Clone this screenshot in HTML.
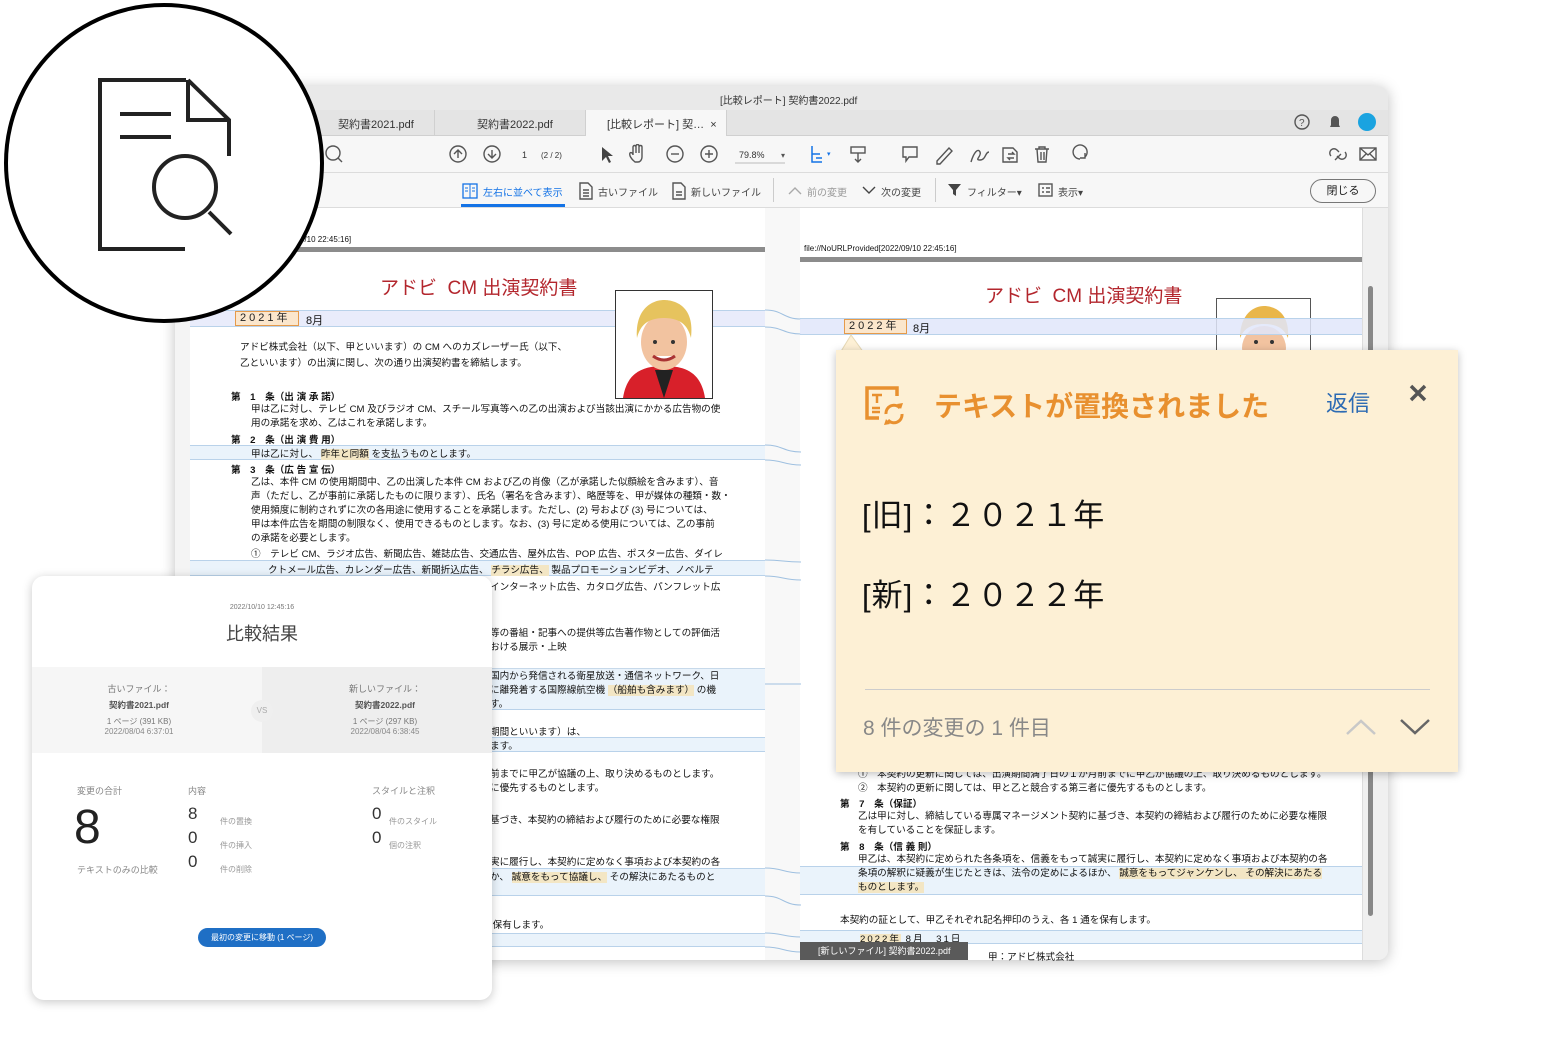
<!DOCTYPE html>
<html><head><meta charset="utf-8">
<style>
*{margin:0;padding:0;box-sizing:border-box}
body{width:1544px;height:1046px;background:#fff;position:relative;overflow:hidden;font-family:"Liberation Sans","Noto Sans CJK JP",sans-serif;color:#222}
.a{position:absolute;white-space:nowrap}
.win{position:absolute;left:175px;top:86px;width:1213px;height:874px;background:#f4f4f4;border-radius:10px;box-shadow:0 2px 14px rgba(0,0,0,.25);overflow:hidden}
.t{font-size:9.6px;color:#111}
.band{position:absolute;background:#eaf3fb;border-top:1px solid #b9d2ea;border-bottom:1px solid #b9d2ea}
.hl{background:#f3e6c4}
.ic{stroke:#555;fill:none;stroke-width:1.4}
</style></head><body>

<div class="win">
  <div class="a" style="left:0;top:0;width:1213px;height:24px;background:#e9e9e9"></div>
  <div class="a" style="left:545px;top:6px;font-size:10px;color:#333">[比較レポート] 契約書2022.pdf</div>
  <div class="a" style="left:0;top:24px;width:1213px;height:26px;background:#e4e4e4;border-bottom:1px solid #d0d0d0"></div>
  <div class="a" style="left:120px;top:24px;width:140px;height:26px;border-right:1px solid #d0d0d0"></div>
  <div class="a" style="left:163px;top:30px;font-size:11px;color:#333">契約書2021.pdf</div>
  <div class="a" style="left:302px;top:30px;font-size:11px;color:#333">契約書2022.pdf</div>
  <div class="a" style="left:410px;top:24px;width:142px;height:27px;background:#f7f7f7;border-left:1px solid #d0d0d0;border-right:1px solid #d0d0d0"></div>
  <div class="a" style="left:432px;top:30px;font-size:11px;color:#333">[比較レポート] 契… &nbsp;×</div>
  <svg class="a" style="left:1118px;top:25px" width="90" height="22"><circle cx="9" cy="11" r="7" class="ic"/><text x="6" y="15" font-size="10" fill="#555">?</text><path d="M42 4v2M37 16h10l-1-2v-5a4 4 0 0 0-8 0v5z" fill="#555"/><circle cx="74" cy="11" r="9" fill="#1aa3e0"/></svg>
  <div class="a" style="left:0;top:50px;width:1213px;height:37px;background:#f7f7f7;border-bottom:1px solid #dcdcdc"></div>
  <svg class="a" style="left:140px;top:58px" width="1070" height="22">
    <circle cx="18" cy="9" r="7" class="ic"/><path d="M23 14l4 4" class="ic"/>
    <circle cx="143" cy="10" r="8" class="ic"/><path d="M143 14V6M139 10l4-4 4 4" class="ic"/>
    <circle cx="177" cy="10" r="8" class="ic" stroke="#aaa"/><path d="M177 6v8M173 10l4 4 4-4" class="ic" stroke="#aaa"/>
    <text x="207" y="14" font-size="9" fill="#333">1</text><text x="226" y="14" font-size="8" fill="#333">(2 / 2)</text>
    <path d="M287 3v14l4-4 3 6 2-1-3-6h5z" fill="#444"/>
    <path d="M320 18c-4-3-6-7-5-9 1-1 3 0 3 2V3c0-2 3-2 3 0v6-7c0-2 3-2 3 0v7-6c0-2 3-2 3 0v10c0 3-2 5-4 5z" class="ic"/>
    <circle cx="360" cy="10" r="8" class="ic"/><path d="M356 10h8" class="ic"/>
    <circle cx="394" cy="10" r="8" class="ic"/><path d="M390 10h8M394 6v8" class="ic"/>
    <text x="424" y="14" font-size="9" fill="#333">79.8%</text><text x="466" y="14" font-size="8" fill="#555">▾</text><path d="M420 19h50" stroke="#bbb"/>
    <path d="M497 2v16h10M497 10h8M501 14h6" stroke="#1473e6" fill="none" stroke-width="1.5"/><text x="512" y="12" font-size="7" fill="#1473e6">▾</text>
    <rect x="536" y="3" width="14" height="6" class="ic" stroke="#aaa"/><path d="M543 9v9M540 15l3 3 3-3" class="ic" stroke="#aaa"/>
    <path d="M588 3h14v10h-8l-3 4v-4h-3z" class="ic"/>
    <path d="M622 17l12-13 3 3-12 13h-3z" class="ic"/>
    <path d="M656 18c3-10 7-14 9-10s-6 8 0 8 5-8 9-8" class="ic"/>
    <path d="M688 4h10l4 4v10h-14z M693 10h6l-2-2M699 14h-6l2 2" class="ic"/>
    <path d="M720 5h14M724 5V3h6v2M722 5l1 13h8l1-13M726 8v8M729 8v8" class="ic"/>
    <path d="M765 15a7 7 0 1 1 5-2M770 9v5h-5" class="ic"/>
    <path d="M1020 16l6-6M1016 12a4 4 0 0 1 6-6l2 2M1030 8a4 4 0 0 1-6 6l-2-2" class="ic"/>
    <rect x="1045" y="4" width="16" height="12" class="ic"/><path d="M1045 4l8 7 8-7M1045 16l6-6M1061 16l-6-6" class="ic"/>
    <circle cx="1082" cy="9" r="7" class="ic" stroke-width="2"/><path d="M1082 6v8M1086 15h6M1089 12v6" class="ic"/>
  </svg>
  <div class="a" style="left:0;top:87px;width:1213px;height:35px;background:#f7f7f7;border-bottom:1px solid #dcdcdc"></div>
  <div class="a" style="left:286px;top:118px;width:104px;height:3px;background:#1473e6"></div>
  <svg class="a" style="left:286px;top:96px" width="20" height="18"><rect x="2" y="2" width="14" height="14" stroke="#1473e6" fill="none" stroke-width="1.3"/><path d="M9 2v14M4 6h3M4 9h3M11 6h3M11 9h3" stroke="#1473e6"/></svg>
  <div class="a" style="left:308px;top:98px;font-size:10px;color:#1473e6">左右に並べて表示</div>
  <svg class="a" style="left:403px;top:96px" width="16" height="18"><path d="M2 1h8l4 4v12H2z" class="ic"/><path d="M5 8h6M5 11h6M5 14h6" class="ic"/></svg>
  <div class="a" style="left:423px;top:98px;font-size:10px;color:#444">古いファイル</div>
  <svg class="a" style="left:496px;top:96px" width="16" height="18"><path d="M2 1h8l4 4v12H2z" class="ic"/><path d="M5 10h6M5 13h6" class="ic"/></svg>
  <div class="a" style="left:516px;top:98px;font-size:10px;color:#444">新しいファイル</div>
  <div class="a" style="left:598px;top:92px;width:1px;height:24px;background:#ccc"></div>
  <svg class="a" style="left:612px;top:98px" width="16" height="12"><path d="M2 10l6-6 6 6" stroke="#aaa" fill="none" stroke-width="1.4"/></svg>
  <div class="a" style="left:632px;top:98px;font-size:10px;color:#999">前の変更</div>
  <svg class="a" style="left:686px;top:98px" width="16" height="12"><path d="M2 3l6 6 6-6" stroke="#444" fill="none" stroke-width="1.4"/></svg>
  <div class="a" style="left:706px;top:98px;font-size:10px;color:#444">次の変更</div>
  <div class="a" style="left:760px;top:92px;width:1px;height:24px;background:#ccc"></div>
  <svg class="a" style="left:772px;top:97px" width="16" height="14"><path d="M1 1h13l-5 6v6l-3-2V7z" fill="#444"/></svg>
  <div class="a" style="left:792px;top:98px;font-size:10px;color:#444">フィルター▾</div>
  <svg class="a" style="left:863px;top:97px" width="16" height="14"><rect x="1" y="1" width="13" height="12" class="ic"/><path d="M4 5h2M4 9h2M8 5h4M8 9h4" class="ic"/></svg>
  <div class="a" style="left:883px;top:98px;font-size:10px;color:#444">表示▾</div>
  <div class="a" style="left:1135px;top:93px;width:66px;height:24px;border:1px solid #777;border-radius:12px;font-size:11px;text-align:center;line-height:22px;color:#222">閉じる</div>

  <div class="a" style="left:15px;top:122px;width:575px;height:752px;background:#fff"></div>
  <div class="a" style="left:590px;top:122px;width:35px;height:752px;background:#f8f8f8"></div>
  <div class="a" style="left:625px;top:122px;width:562px;height:752px;background:#fff"></div>
  <div class="a" style="left:1187px;top:122px;width:26px;height:752px;background:#f0f0f0;border-left:1px solid #ddd"></div>
  <div class="a" style="left:1193px;top:200px;width:5px;height:630px;background:#888;border-radius:3px"></div>
</div>

<!-- LEFT PAGE -->
<div class="a" style="left:190px;top:247px;width:575px;height:5px;background:#8c8c8c"></div>
<div class="a t" style="left:300px;top:235px;font-size:8px">9/10 22:45:16]</div>
<div class="a" style="left:380px;top:273px;font-size:19px;color:#b3262d">アドビ &nbsp;CM 出演契約書</div>
<div class="band" style="left:190px;top:310px;width:575px;height:17px;background:#e9ecfb"></div>
<div class="a" style="left:235px;top:311px;width:64px;height:15px;border:1.5px solid #e59a4a;background:#fbe6cc;font-size:11px;letter-spacing:3px;padding-left:4px;line-height:13px">2021年</div>
<div class="a t" style="left:306px;top:312px;font-size:11px">8月</div>
<svg class="a" style="left:615px;top:290px" width="98" height="109"><rect x="0.5" y="0.5" width="97" height="108" fill="#fff" stroke="#333"/><path d="M8 108c4-26 20-32 41-32s37 6 41 32z" fill="#d8202a"/><path d="M40 80l9 28 9-28z" fill="#222"/><ellipse cx="49" cy="52" rx="23" ry="28" fill="#f2c3a0"/><path d="M22 48c-2-30 16-38 27-38s31 6 27 38c-3-12-10-20-27-20s-24 8-27 20z" fill="#e6c35e"/><path d="M38 66q11 8 22 0" stroke="#a33" stroke-width="3" fill="#fff"/><circle cx="40" cy="52" r="2" fill="#333"/><circle cx="58" cy="52" r="2" fill="#333"/></svg>
<div class="a t" style="left:240px;top:340px;line-height:16px">アドビ株式会社（以下、甲といいます）の CM へのカズレーザー氏（以下、<br>乙といいます）の出演に関し、次の通り出演契約書を締結します。</div>
<div class="a t" style="left:231px;top:389px;font-weight:bold">第　1　条（出 演 承 諾）</div>
<div class="a t" style="left:251px;top:403px;line-height:14px">甲は乙に対し、テレビ CM 及びラジオ CM、スチール写真等への乙の出演および当該出演にかかる広告物の使<br>用の承諾を求め、乙はこれを承諾します。</div>
<div class="a t" style="left:231px;top:432px;font-weight:bold">第　2　条（出 演 費 用）</div>
<div class="band" style="left:190px;top:445px;width:575px;height:15px"></div>
<div class="a t" style="left:251px;top:446px">甲は乙に対し、 <span class="hl">昨年と同額</span> を支払うものとします。</div>
<div class="a t" style="left:231px;top:462px;font-weight:bold">第　3　条（広 告 宣 伝）</div>
<div class="a t" style="left:251px;top:476px;line-height:14px">乙は、本件 CM の使用期間中、乙の出演した本件 CM および乙の肖像（乙が承諾した似顔絵を含みます）、音<br>声（ただし、乙が事前に承諾したものに限ります）、氏名（署名を含みます）、略歴等を、甲が媒体の種類・数・<br>使用頻度に制約されずに次の各用途に使用することを承諾します。ただし、(2) 号および (3) 号については、<br>甲は本件広告を期間の制限なく、使用できるものとします。なお、(3) 号に定める使用については、乙の事前<br>の承諾を必要とします。</div>
<div class="a t" style="left:251px;top:546px">①　テレビ CM、ラジオ広告、新聞広告、雑誌広告、交通広告、屋外広告、POP 広告、ポスター広告、ダイレ</div>
<div class="band" style="left:190px;top:560px;width:575px;height:16px"></div>
<div class="a t" style="left:268px;top:562px">クトメール広告、カレンダー広告、新聞折込広告、 <span class="hl">チラシ広告、</span> 製品プロモーションビデオ、ノベルテ</div>
<div class="a t" style="left:490px;top:579px">インターネット広告、カタログ広告、パンフレット広</div>
<div class="a t" style="left:490px;top:627px;line-height:14px">等の番組・記事への提供等広告著作物としての評価活<br>おける展示・上映</div>
<div class="band" style="left:490px;top:668px;width:275px;height:42px;border-top-color:#c7d9ea"></div>
<div class="a t" style="left:490px;top:670px;line-height:14px">国内から発信される衛星放送・通信ネットワーク、日<br>に離発着する国際線航空機 <span class="hl">（船舶も含みます）</span> の機<br>す。</div>
<div class="band" style="left:490px;top:737px;width:275px;height:15px"></div>
<div class="a t" style="left:490px;top:726px;line-height:14px">期間といいます）は、<br>ます。</div>
<div class="a t" style="left:490px;top:768px;line-height:14px">前までに甲乙が協議の上、取り決めるものとします。<br>に優先するものとします。</div>
<div class="a t" style="left:490px;top:812px">基づき、本契約の締結および履行のために必要な権限</div>
<div class="band" style="left:490px;top:868px;width:275px;height:28px"></div>
<div class="a t" style="left:490px;top:855px;line-height:15px">実に履行し、本契約に定めなく事項および本契約の各<br>か、 <span class="hl">誠意をもって協議し、</span> その解決にあたるものと</div>
<div class="a t" style="left:490px;top:917px">:保有します。</div>
<div class="band" style="left:490px;top:933px;width:275px;height:14px"></div>

<svg class="a" style="left:765px;top:300px" width="36" height="660"><g stroke="#9fc0e0" fill="none"><path d="M0 10C18 10 18 19 36 19M0 27C18 27 18 34 36 34M0 145C18 145 18 152 36 152M0 160C18 160 18 165 36 165M0 260C18 260 18 262 36 262M0 276C18 276 18 280 36 280M0 384h36M0 568C18 568 18 573 36 573M0 596C18 596 18 605 36 605M0 633C18 633 18 637 36 637M0 647C18 647 18 652 36 652"/></g></svg>

<!-- RIGHT PAGE -->
<div class="a" style="left:804px;top:244px;font-size:8px;color:#111">file://NoURLProvided[2022/09/10 22:45:16]</div>
<div class="a" style="left:800px;top:257px;width:562px;height:5px;background:#8c8c8c"></div>
<div class="a" style="left:985px;top:281px;font-size:19px;color:#b3262d">アドビ &nbsp;CM 出演契約書</div>
<svg class="a" style="left:1216px;top:298px" width="95" height="60"><rect x="0.5" y="0.5" width="94" height="59" fill="#fff" stroke="#555"/><ellipse cx="48" cy="50" rx="22" ry="22" fill="#f2c3a0"/><path d="M24 40c0-24 14-32 24-32s26 6 24 32c-4-10-12-14-24-14s-20 4-24 14z" fill="#e9b64a"/><circle cx="40" cy="44" r="2" fill="#333"/><circle cx="56" cy="44" r="2" fill="#333"/></svg>
<div class="band" style="left:800px;top:318px;width:562px;height:17px;background:rgba(225,230,250,.85)"></div>
<div class="a" style="left:844px;top:319px;width:63px;height:15px;border:1.5px solid #e59a4a;background:#fbe6cc;font-size:11px;letter-spacing:3px;padding-left:4px;line-height:13px">2022年</div>
<div class="a t" style="left:913px;top:320px;font-size:11px">8月</div>
<div class="a t" style="left:858px;top:768px;line-height:14px">①　本契約の更新に関しては、出演期間満了日の１か月前までに甲乙が協議の上、取り決めるものとします。<br>②　本契約の更新に関しては、甲と乙と競合する第三者に優先するものとします。</div>
<div class="a t" style="left:840px;top:796px;font-weight:bold">第　7　条（保証）</div>
<div class="a t" style="left:858px;top:810px;line-height:14px">乙は甲に対し、締結している専属マネージメント契約に基づき、本契約の締結および履行のために必要な権限<br>を有していることを保証します。</div>
<div class="a t" style="left:840px;top:839px;font-weight:bold">第　8　条（信 義 則）</div>
<div class="band" style="left:800px;top:866px;width:562px;height:29px"></div>
<div class="a t" style="left:858px;top:853px;line-height:14px">甲乙は、本契約に定められた各条項を、信義をもって誠実に履行し、本契約に定めなく事項および本契約の各<br>条項の解釈に疑義が生じたときは、法令の定めによるほか、 <span class="hl">誠意をもってジャンケンし、 その解決にあたる</span><br><span class="hl">ものとします。</span></div>
<div class="a t" style="left:840px;top:912px">本契約の証として、甲乙それぞれ記名押印のうえ、各 1 通を保有します。</div>
<div class="band" style="left:800px;top:930px;width:562px;height:14px"></div>
<div class="a t" style="left:860px;top:931px;letter-spacing:2px"><span class="hl">2022年</span> 8月　31日</div>
<div class="a t" style="left:988px;top:949px">甲：アドビ株式会社</div>
<div class="a" style="left:800px;top:942px;width:168px;height:18px;background:#5a5a5a;color:#fff;font-size:9px;line-height:18px;padding-left:18px">[新しいファイル] 契約書2022.pdf</div>

<!-- YELLOW POPUP -->
<svg class="a" style="left:838px;top:332px" width="30" height="22"><path d="M2 21L13 3l13 18" fill="#fdf0d5" stroke="#e6d8b5"/></svg>
<div class="a" style="left:836px;top:350px;width:622px;height:422px;background:#fdf0d5;box-shadow:0 2px 8px rgba(0,0,0,.25)"></div>
<svg class="a" style="left:862px;top:384px" width="52" height="44"><path d="M17 34H5V4h30v8" stroke="#e8902f" stroke-width="3.5" fill="none"/><path d="M10 11h10M15 11v8M10 24h8M10 28h8" stroke="#e8902f" stroke-width="2.5"/><path d="M24 30a8 8 0 0 1 14-6M40 30a8 8 0 0 1-14 6" stroke="#e8902f" stroke-width="3" fill="none"/><path d="M35 20l4 5 2-6zM28 40l-4-5-2 6z" fill="#e8902f"/></svg>
<div class="a" style="left:934px;top:385px;font-size:28px;font-weight:bold;color:#e8902f">テキストが置換されました</div>
<div class="a" style="left:1326px;top:386px;font-size:22px;color:#2d6bb3">返信</div>
<svg class="a" style="left:1408px;top:383px" width="20" height="20"><path d="M3 3l14 14M17 3L3 17" stroke="#555" stroke-width="3.5"/></svg>
<div class="a" style="left:862px;top:490px;font-size:31px;color:#111;letter-spacing:1px">[旧]：２０２１年</div>
<div class="a" style="left:862px;top:570px;font-size:31px;color:#111;letter-spacing:1px">[新]：２０２２年</div>
<div class="a" style="left:865px;top:689px;width:565px;height:1px;background:#ccc"></div>
<div class="a" style="left:863px;top:712px;font-size:21px;color:#888">8 件の変更の 1 件目</div>
<svg class="a" style="left:1344px;top:714px" width="90" height="24"><path d="M3 20l14-13 14 13" stroke="#c8c8c8" stroke-width="2.5" fill="none"/><path d="M57 6l14 13 14-13" stroke="#666" stroke-width="2.5" fill="none"/></svg>

<!-- SUMMARY CARD -->
<div class="a" style="left:32px;top:576px;width:460px;height:424px;background:#fff;border-radius:12px;box-shadow:0 2px 10px rgba(0,0,0,.22);overflow:hidden">
  <div class="a" style="left:0;top:28px;width:460px;text-align:center;font-size:7px;color:#777">2022/10/10 12:45:16</div>
  <div class="a" style="left:0;top:44px;width:460px;text-align:center;font-size:18px;color:#444">比較結果</div>
  <div class="a" style="left:0;top:91px;width:230px;height:86px;background:#f6f6f6"></div>
  <div class="a" style="left:230px;top:91px;width:230px;height:86px;background:#eeeeee"></div>
  <div class="a" style="left:0;top:105px;width:214px;text-align:center;font-size:9px;color:#777;line-height:16px">古いファイル：<br><b style="color:#555;font-size:8.5px">契約書2021.pdf</b><br><span style="font-size:8px">1 ページ (391 KB)</span></div>
  <div class="a" style="left:0;top:151px;width:214px;text-align:center;font-size:8px;color:#888">2022/08/04 6:37:01</div>
  <div class="a" style="left:219px;top:124px;width:22px;height:22px;border-radius:11px;background:#efefef;font-size:8px;color:#aaa;text-align:center;line-height:22px">VS</div>
  <div class="a" style="left:246px;top:105px;width:214px;text-align:center;font-size:9px;color:#777;line-height:16px">新しいファイル：<br><b style="color:#555;font-size:8.5px">契約書2022.pdf</b><br><span style="font-size:8px">1 ページ (297 KB)</span></div>
  <div class="a" style="left:246px;top:151px;width:214px;text-align:center;font-size:8px;color:#888">2022/08/04 6:38:45</div>
  <div class="a" style="left:45px;top:208px;font-size:9px;color:#888">変更の合計</div>
  <div class="a" style="left:42px;top:224px;font-size:48px;color:#222">8</div>
  <div class="a" style="left:45px;top:287px;font-size:9px;color:#888">テキストのみの比較</div>
  <div class="a" style="left:156px;top:208px;font-size:9px;color:#888">内容</div>
  <div class="a" style="left:156px;top:226px;font-size:17px;color:#333;line-height:24px">8<br>0<br>0</div>
  <div class="a" style="left:188px;top:234px;font-size:8px;color:#999;line-height:24px">件の置換<br>件の挿入<br>件の削除</div>
  <div class="a" style="left:340px;top:208px;font-size:9px;color:#888">スタイルと注釈</div>
  <div class="a" style="left:340px;top:226px;font-size:17px;color:#333;line-height:24px">0<br>0</div>
  <div class="a" style="left:357px;top:234px;font-size:8px;color:#999;line-height:24px">件のスタイル<br>個の注釈</div>
  <div class="a" style="left:166px;top:352px;width:128px;height:19px;border-radius:10px;background:#1f6fc5;color:#fff;font-size:8px;text-align:center;line-height:19px">最初の変更に移動 (1 ページ)</div>
</div>

<!-- CIRCLE ICON -->
<svg class="a" style="left:0;top:0" width="330" height="330">
  <circle cx="164" cy="163" r="158" fill="#fff" stroke="#000" stroke-width="4"/>
  <g stroke="#222" stroke-width="4" fill="none">
    <path d="M186 80H100v169h85"/>
    <path d="M188 80v40h41M188 80l41 40v36"/>
    <path d="M120 114h51M120 137h51"/>
    <circle cx="185" cy="187" r="31"/>
    <path d="M209 212l22 22"/>
  </g>
</svg>
</body></html>
